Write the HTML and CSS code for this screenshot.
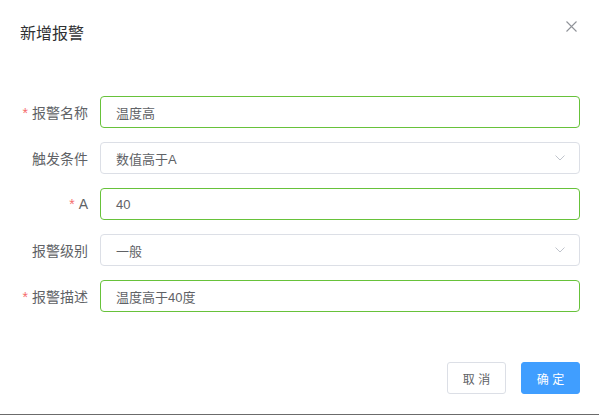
FILE: index.html
```html
<!DOCTYPE html>
<html lang="zh-CN">
<head>
<meta charset="utf-8">
<title>新增报警</title>
<link rel="stylesheet" href="styles.css">
</head>
<body>
<div class="dialog">
  <div class="dialog-header">
    <span class="dialog-title">新增报警</span>
    <button class="dialog-close" aria-label="关闭">
      <svg width="11" height="11" viewBox="0 0 11 11"><path d="M0.5 0.5L10.5 10.5M10.5 0.5L0.5 10.5" stroke="#909399" stroke-width="1.1" fill="none"/></svg>
    </button>
  </div>
  <form class="form">
    <div class="form-item">
      <label class="form-label"><span class="req">*</span>报警名称</label>
      <div class="input success"><span class="input-text">温度高</span></div>
    </div>
    <div class="form-item">
      <label class="form-label">触发条件</label>
      <div class="input select"><span class="input-text">数值高于A</span>
        <svg class="chevron" width="10" height="6" viewBox="0 0 10 6"><path d="M0.5 0.5L5 5L9.5 0.5" stroke="#C0C4CC" stroke-width="1" fill="none"/></svg>
      </div>
    </div>
    <div class="form-item">
      <label class="form-label"><span class="req">*</span>A</label>
      <div class="input success"><span class="input-text">40</span></div>
    </div>
    <div class="form-item">
      <label class="form-label">报警级别</label>
      <div class="input select"><span class="input-text">一般</span>
        <svg class="chevron" width="10" height="6" viewBox="0 0 10 6"><path d="M0.5 0.5L5 5L9.5 0.5" stroke="#C0C4CC" stroke-width="1" fill="none"/></svg>
      </div>
    </div>
    <div class="form-item">
      <label class="form-label"><span class="req">*</span>报警描述</label>
      <div class="input success"><span class="input-text">温度高于40度</span></div>
    </div>
  </form>
  <div class="dialog-footer">
    <button class="btn btn-default">取 消</button>
    <button class="btn btn-primary">确 定</button>
  </div>
</div>
</body>
</html>
```
FILE: styles.css
```css
html, body {
  margin: 0;
  padding: 0;
}
body {
  width: 599px;
  height: 415px;
  background: #6b6b6b;
  font-family: "Liberation Sans", Arial, "Noto Sans CJK SC", sans-serif;
  overflow: hidden;
}
.dialog {
  position: relative;
  height: 414px;
  background: #fff;
  display: flex;
  flex-direction: column;
}
.dialog-header {
  padding: 22px 20px 0 20px;
  height: 24px;
}
.dialog-title {
  font-size: 16px;
  line-height: 24px;
  color: #303133;
}
.dialog-close {
  position: absolute;
  top: 21px;
  right: 22px;
  width: 11px;
  height: 11px;
  padding: 0;
  border: 0;
  background: none;
  display: flex;
}
.form {
  margin: 50px 0 0 0;
  padding: 0 19px 0 0;
  display: flex;
  flex-direction: column;
  gap: 14px;
}
.form-item {
  display: flex;
  align-items: center;
  height: 32px;
}
.form-label {
  width: 88px;
  padding-right: 12px;
  text-align: right;
  font-size: 14px;
  color: #606266;
  flex-shrink: 0;
}
.req {
  color: #F56C6C;
  margin-right: 4px;
}
.input {
  flex: 1;
  height: 32px;
  box-sizing: border-box;
  border: 1px solid #DCDFE6;
  border-radius: 4px;
  padding: 0 15px;
  display: flex;
  align-items: center;
  justify-content: space-between;
}
.input.success {
  border-color: #67C23A;
}
.input-text {
  font-size: 13px;
  color: #606266;
}
.chevron {
  margin-right: -1px;
}
.dialog-footer {
  margin-top: auto;
  padding: 0 19px 20px 0;
  display: flex;
  justify-content: flex-end;
  gap: 15px;
}
.btn {
  height: 32px;
  width: 59px;
  box-sizing: border-box;
  border-radius: 3px;
  font-family: inherit;
  font-size: 12px;
  padding: 0;
  cursor: pointer;
}
.btn-default {
  background: #fff;
  border: 1px solid #DCDFE6;
  color: #606266;
}
.btn-primary {
  background: #409EFF;
  border: 1px solid #409EFF;
  color: #fff;
}
```
